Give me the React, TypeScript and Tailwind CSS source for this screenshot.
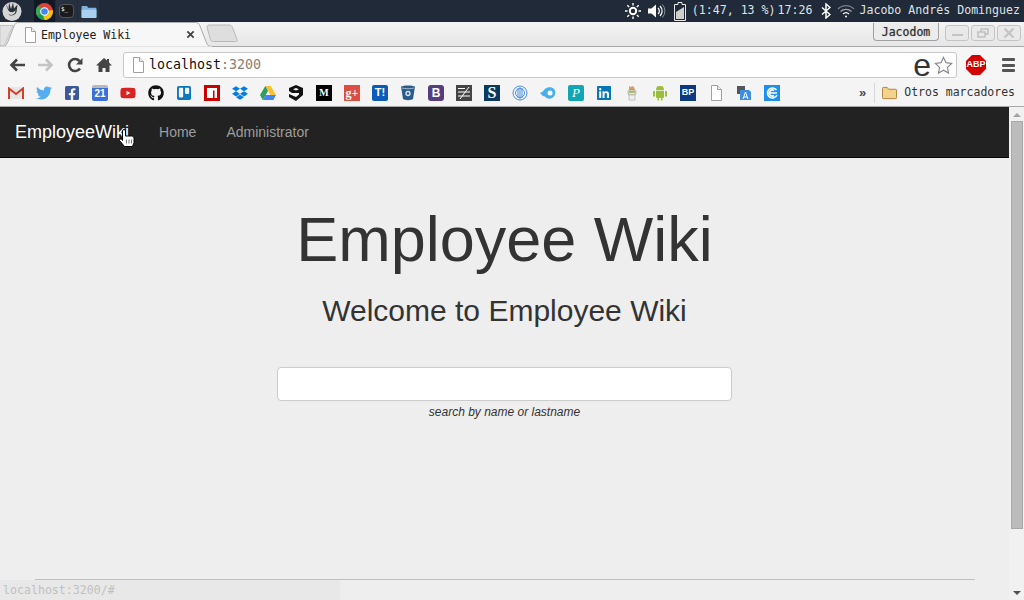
import React from 'react'
import {
  FaTwitter, FaFacebookSquare, FaYoutube, FaGithub, FaTrello, FaDropbox, FaLinkedin,
} from 'react-icons/fa'

const mono = "font-['DejaVu_Sans_Mono',monospace]"

const DocIcon = ({ className = '' }: { className?: string }) => (
  <svg viewBox="0 0 14 16" className={className}>
    <path d="M2.5 .5h6l4 4v11h-10z" fill="#fff" stroke="#a0a0a0" />
    <path d="M8.5 .5v4h4" fill="#eee" stroke="#a0a0a0" />
  </svg>
)

const Topbar = () => (
  <div className={`flex h-[22px] items-center bg-[#202a39] text-[11.6px] text-[#dfe3e8] ${mono}`}>
    <div className="flex h-[22px] w-[22px] items-center justify-center pl-[2px]">
      <svg viewBox="0 0 20 20" className="h-5 w-5">
        <circle cx="10" cy="10.500" r="9.500" fill="#d4d4d4" />
        <path d="M4 2.500l2.500 6 .5-7 2 6.500 2-6.500 1 6 3.500-4-1 7.500c-1 3-5.500 4.500-8 2.500 2 0 3.500-1 3.500-2.500-2.500 1-4.500-2-6-8.500z" fill="#2a2f38" />
        <path d="M7 10.500c2 1.500 5 1 6.500-1.500l-.5 3c-2 2-4 2.500-5.500 1.500z" fill="#d4d4d4" />
      </svg>
    </div>
    <div className="ml-[12px] flex h-[22px] gap-px">
      <div className="flex w-[21px] items-center justify-center bg-[#111926]">
        <svg viewBox="0 0 16 16" className="h-[17px] w-[17px]">
          <circle cx="8" cy="8" r="8" fill="#db4437" />
          <path d="M8 8L1 12a8 8 0 0 0 7 4z" fill="#0f9d58" />
          <path d="M8 8l7.800-1.500A8 8 0 0 1 8 16l-1-3z" fill="#f4c20d" />
          <path d="M8 8L1 12A8 8 0 0 1 2 2.700z" fill="#3aa757" />
          <circle cx="8" cy="8" r="3.600" fill="#4285f4" stroke="#fff" />
        </svg>
      </div>
      <div className="flex w-[21px] items-center justify-center bg-[#263040]">
        <div className="h-[14px] w-[15px] rounded-sm border border-[#555] bg-[#1a1a1a] pl-px text-[6px] leading-[8px] text-white">$_</div>
      </div>
      <div className="flex w-[21px] items-center justify-center bg-[#263040]">
        <svg viewBox="0 0 16 14" className="h-[13px] w-4">
          <path d="M0 2a1 1 0 0 1 1-1h5l1 2h8a1 1 0 0 1 1 1v9a1 1 0 0 1-1 1H1a1 1 0 0 1-1-1z" fill="#7fb2dc" />
          <path d="M0 5h16v8a1 1 0 0 1-1 1H1a1 1 0 0 1-1-1z" fill="#a9d0ee" />
        </svg>
      </div>
    </div>
    <div className="ml-auto flex items-center">
      <svg viewBox="0 0 16 16" className="h-4 w-4 text-white" fill="none" stroke="currentColor">
        <circle cx="8" cy="8" r="3.200" strokeWidth="2" />
        <path d="M8 0v2.500M8 13.500V16M0 8h2.500M13.500 8H16M2.300 2.300l1.800 1.800M11.900 11.900l1.800 1.800M2.300 13.700l1.800-1.800M11.900 4.100l1.800-1.800" strokeWidth="1.400" />
      </svg>
      <svg viewBox="0 0 20 16" className="ml-[6px] h-4 w-5">
        <path d="M1 5.500h3.500L9 1.500v13l-4.500-4H1z" fill="#fff" />
        <path d="M11 5a4 4 0 0 1 0 6M13 3a7 7 0 0 1 0 10" fill="none" stroke="#fff" strokeWidth="1.200" />
        <path d="M15.500 1.500a10 10 0 0 1 0 13" fill="none" stroke="#8a8f98" />
      </svg>
      <svg viewBox="0 0 12 19" className="ml-[7px] h-[19px] w-3">
        <path d="M.5 2.500h3.500V.5h4v2h3.500v16H.5z" fill="#202a39" stroke="#e8e8e8" />
        <path d="M2 17V10l8-5v12z" fill="#cfcfcf" />
      </svg>
      <span className="ml-[6px] whitespace-pre">(1:47, 13 %)</span>
      <span className="ml-[2px]">17:26</span>
      <svg viewBox="0 0 10 16" className="ml-[9px] h-4 w-[10px]" fill="none" stroke="#fff" strokeWidth="1.500">
        <path d="M1 4.500l8 7-4 3.500V1l4 3.500-8 7" />
      </svg>
      <svg viewBox="0 0 18 14" className="ml-[6px] h-[14px] w-[18px]" fill="none" strokeWidth="1.300">
        <path d="M1 5a11 11 0 0 1 16 0" stroke="#7b818a" />
        <path d="M3.500 7.500a8 8 0 0 1 11 0" stroke="#a5a9af" />
        <path d="M6 10a4.500 4.500 0 0 1 6 0" stroke="#fff" />
        <circle cx="9" cy="12.500" r="1" fill="#fff" stroke="none" />
      </svg>
      <span className="ml-[4px] mr-[4px] whitespace-nowrap">Jacobo Andrés Dominguez</span>
    </div>
  </div>
)

const Tabstrip = () => (
  <div className="relative flex h-[25px] items-start border-b border-[#a9a9a9] bg-gradient-to-b from-[#f4f4f4] to-[#e6e6e6]">
    <svg viewBox="0 0 245 25" className="absolute left-0 top-0 h-[25px] w-[245px]">
      <path d="M0 3.500h13L5 22c-.5 1-1 1.500-2 1.500H0z" fill="#e2e2e2" stroke="#c4c4c4" />
      <path d="M0 24.500h3C6 24.500 7 22 8 19.500L14 4c1-2.500 2-3.500 5-3.500h176c3 0 4 1 5 3.500l6 15.500c1 2.500 2 5 5 5" fill="#f7f7f7" stroke="#ababab" />
      <path d="M0 25h212" stroke="#f6f6f6" />
      <path d="M207 5.500c0-1.500 .5-2.500 2-2.500h20c2 0 3 1 3.500 2.500l4.500 12c.5 1.500 0 2-1.500 2h-22c-1.500 0-2.500-.5-3-2z" fill="#dedede" stroke="#b8b8b8" />
    </svg>
    <DocIcon className="relative ml-[23px] mt-[5px] h-4 w-[14px]" />
    <span className={`relative ml-[4px] mt-[5px] w-[145px] text-[11.5px] leading-[17px] text-[#222] ${mono}`}>Employee Wiki</span>
    <svg viewBox="0 0 10 10" className="relative mt-[8px] h-[9px] w-[9px]" stroke="#444" strokeWidth="2">
      <path d="M1.500 1.500l7 7M8.500 1.500l-7 7" />
    </svg>
    <div className="relative ml-auto mr-[3px] flex items-start">
      <div className={`mt-px flex h-[18px] w-[66px] items-center justify-center rounded-b-[4px] border border-t-0 border-[#a0a0a0] bg-[#ececec] pt-[2px] text-[11.500px] text-[#333] [text-shadow:0_0_1px_#777] ${mono}`}>Jacodom</div>
      <div className="ml-[6px] mt-[3px] flex gap-[2px]">
        <div className="flex h-[16px] w-[24px] items-center justify-center rounded-[3px] border border-[#c4c4c4] bg-[#e9e9e9]">
          <div className="mt-[4px] h-[2px] w-[11px] bg-[#c4c4c4]"></div>
        </div>
        <div className="flex h-[16px] w-[24px] items-center justify-center rounded-[3px] border border-[#c4c4c4] bg-[#e9e9e9]">
          <svg viewBox="0 0 12 10" className="h-[10px] w-3" fill="none" stroke="#bbb" strokeWidth="1.300">
            <rect x="4" y="1" width="7" height="5" />
            <rect x="1" y="4" width="7" height="5" fill="#e9e9e9" />
          </svg>
        </div>
        <div className="flex h-[16px] w-[24px] items-center justify-center rounded-[3px] border border-[#c4c4c4] bg-[#e9e9e9]">
          <svg viewBox="0 0 12 10" className="h-[10px] w-3" stroke="#c4c4c4" strokeWidth="2.200">
            <path d="M1.500 .5l9 9M10.500 .5l-9 9" />
          </svg>
        </div>
      </div>
    </div>
  </div>
)

const Toolbar = () => (
  <div className="flex h-[33px] items-center bg-[#f6f6f6] pt-[3px]">
    <svg viewBox="0 0 16 14" className="ml-[9px] h-[14px] w-4" fill="none" stroke="#444" strokeWidth="2.600">
      <path d="M16 7H3M8 1.500L2.500 7 8 12.500" />
    </svg>
    <svg viewBox="0 0 16 14" className="ml-[13px] h-[14px] w-4" fill="none" stroke="#c4c4c4" strokeWidth="2.600">
      <path d="M0 7h13M8 1.500L13.500 7 8 12.500" />
    </svg>
    <svg viewBox="0 0 16 16" className="ml-[13px] h-4 w-4" fill="none" stroke="#444" strokeWidth="2.600">
      <path d="M13 11.500A6 6 0 1 1 12.500 4" />
      <path d="M15.500 1v6.500H9z" fill="#444" stroke="none" />
    </svg>
    <svg viewBox="0 0 16 16" className="ml-[13px] h-4 w-4" fill="#444">
      <path d="M8 1L0 8.500h2.500V15h4v-4h3v4h4V8.500H16l-3-3V2h-2v1.500z" />
    </svg>
    <div className="ml-[11px] flex h-[26px] w-[834px] shrink-0 items-center rounded-[3px] border border-[#c8c8c8] bg-white">
      <DocIcon className="ml-[7px] h-4 w-[14px]" />
      <span className={`ml-[4px] text-[13.300px] text-[#111] ${mono}`}>localhost<span className="text-[#8b7d73]">:3200</span></span>
      <span className="ml-auto font-['Liberation_Sans',sans-serif] text-[32px] leading-[24px] text-[#333]">e</span>
      <svg viewBox="0 0 20 20" className="mr-[3px] ml-[3px] h-[19px] w-[19px]" fill="#fff" stroke="#888" strokeWidth="1.200">
        <path d="M10 1.500l2.600 5.500 6 .8-4.400 4.200 1.100 6L10 15l-5.300 3 1.100-6-4.400-4.200 6-.8z" />
      </svg>
    </div>
    <div className="ml-[9px] flex h-5 w-5 shrink-0 items-center justify-center bg-[#d40000] font-['Liberation_Sans',sans-serif] text-[9px] font-bold text-white [clip-path:polygon(30%_0,70%_0,100%_30%,100%_70%,70%_100%,30%_100%,0_70%,0_30%)]">ABP</div>
    <div className="ml-[16px] flex w-[13px] shrink-0 flex-col gap-[2.500px]">
      <div className="h-[3px] rounded-[1px] bg-[#555]"></div>
      <div className="h-[3px] rounded-[1px] bg-[#555]"></div>
      <div className="h-[3px] rounded-[1px] bg-[#555]"></div>
    </div>
  </div>
)

const Fav = ({ children, className = '' }: { children?: React.ReactNode; className?: string }) => (
  <div className={`flex h-4 w-4 items-center justify-center overflow-hidden font-['Liberation_Sans',sans-serif] font-bold leading-none ${className}`}>{children}</div>
)

const Bookmarks = () => (
  <div className="flex h-[27px] items-center border-b border-[#a8a8a8] bg-[#f4f4f4] pb-px pl-[8px]">
    <div className="flex gap-3">
      <Fav>
        <svg viewBox="0 0 16 12" className="h-3 w-4">
          <path d="M0 0h16v12H0z" fill="#e6e6e6" />
          <path d="M1 12V1.500L8 7l7-5.500V12" fill="none" stroke="#d0402f" strokeWidth="2" />
        </svg>
      </Fav>
      <Fav><FaTwitter className="h-4 w-4 text-[#55acee]" /></Fav>
      <Fav><FaFacebookSquare className="h-4 w-4 text-[#3b5998]" /></Fav>
      <Fav className="rounded-[2px] border-t-[3px] border-[#b9b9b9] bg-[#3d6fd9] text-[10px] text-white">21</Fav>
      <Fav><FaYoutube className="h-4 w-4 text-[#d92323]" /></Fav>
      <Fav><FaGithub className="h-4 w-4 text-[#111]" /></Fav>
      <Fav><FaTrello className="h-4 w-4 text-[#0c78bd]" /></Fav>
      <Fav className="bg-[#cc0000]">
        <svg viewBox="0 0 16 16" className="h-4 w-4" fill="#fff"><path d="M3 3h10v10h-2.500V5.500H9V13H3z" /></svg>
      </Fav>
      <Fav><FaDropbox className="h-4 w-4 text-[#007ee5]" /></Fav>
      <Fav>
        <svg viewBox="0 0 16 14" className="h-[14px] w-4">
          <path d="M5.300 0h5.400l5.300 9h-5.400z" fill="#fbc02d" />
          <path d="M5.300 0L0 9l2.700 5 5.300-9z" fill="#2e9e5b" />
          <path d="M2.700 14h10.600l2.700-5H5.400z" fill="#4285f4" />
        </svg>
      </Fav>
      <Fav>
        <svg viewBox="0 0 16 16" className="h-4 w-4" fill="#111">
          <path d="M8 0l7 3v7l-7 6-7-4V9l7 3 3-2.500V8H4L1 6V3zM5 4.200L8 5.500l3-1.300L8 3z" />
        </svg>
      </Fav>
      <Fav className="bg-black font-['Liberation_Serif',serif] text-[10px] text-white">M</Fav>
      <Fav className="bg-[#dc4e41] font-['Liberation_Serif',serif] text-[12px] text-white">g+</Fav>
      <Fav className="rounded-[2px] bg-[#0a5cb8] text-[11px] text-white">T!</Fav>
      <Fav>
        <svg viewBox="0 0 16 16" className="h-4 w-4">
          <path d="M1 1.500c3-1.500 11-1.500 14 0L13 14c-2 1.500-8 1.500-10 0z" fill="#2a5b8c" />
          <path d="M2 3c3 1 9 1 12 0" fill="none" stroke="#9fb9d2" />
          <circle cx="8" cy="8.500" r="2" fill="none" stroke="#dfe8f0" strokeWidth="1.300" />
        </svg>
      </Fav>
      <Fav className="rounded-[3px] bg-[#563d7c] text-[12px] text-white">B</Fav>
      <Fav className="bg-[#444]">
        <svg viewBox="0 0 16 16" className="h-4 w-4" fill="none" stroke="#fff"><path d="M2 3.500h7M2 7h12M2 11h12M4 14L13 2" /></svg>
      </Fav>
      <Fav className="bg-[#0b3a5e] font-['Liberation_Serif',serif] text-[16px] text-white">S</Fav>
      <Fav>
        <svg viewBox="0 0 16 16" className="h-4 w-4" fill="none" stroke="#4a90e2">
          <circle cx="8" cy="8" r="7" /><circle cx="8" cy="8" r="4.500" /><path d="M6 3v10M8 2v12M10 3v10" />
        </svg>
      </Fav>
      <Fav>
        <svg viewBox="0 0 16 12" className="h-3 w-4">
          <path d="M0 6c3-1 3-2 5-4 2-2 7-2.500 9 0 2.500 3 1.500 8-3 9.500-3 .5-5-.5-6-2-2 0-3-1-5-3.500z" fill="#48b0e8" />
          <circle cx="10" cy="6" r="2.500" fill="#fff" />
        </svg>
      </Fav>
      <Fav className="rounded-[2px] bg-[#12a5b3] font-['Liberation_Serif',serif] text-[13px] italic font-normal text-white">P</Fav>
      <Fav><FaLinkedin className="h-4 w-4 text-[#0877b5]" /></Fav>
      <Fav>
        <svg viewBox="0 0 12 16" className="h-4 w-3">
          <path d="M3 1l2 1 1-1 2 1 1 3H3z" fill="#d9a066" />
          <rect x="2" y="5" width="8" height="5" rx="2" fill="#f1e6c8" stroke="#777" strokeWidth=".5" />
          <rect x="3" y="10" width="6" height="5" fill="#eee" stroke="#999" strokeWidth=".5" />
          <path d="M3 7h6" stroke="#5a8f2a" />
        </svg>
      </Fav>
      <Fav>
        <svg viewBox="0 0 16 16" className="h-4 w-4" fill="#9cbf3b">
          <path d="M4 5a4 4 0 0 1 8 0z" />
          <path d="M5.500 1l1 1.500M10.500 1l-1 1.500" stroke="#9cbf3b" fill="none" />
          <path d="M4 5.700h8v6.300a1 1 0 0 1-1 1h-.5v2.500H9V13H7v2.500H5.500V13H5a1 1 0 0 1-1-1z" />
          <rect x="1" y="5.700" width="2" height="6" rx="1" />
          <rect x="13" y="5.700" width="2" height="6" rx="1" />
        </svg>
      </Fav>
      <Fav className="bg-[#0b3a82] text-[9px] text-white">BP</Fav>
      <Fav><DocIcon className="h-4 w-[14px]" /></Fav>
      <Fav>
        <svg viewBox="0 0 16 16" className="h-4 w-4">
          <path d="M1 1h8v8H1z" fill="#555" />
          <path d="M4 5h9l2 2v8H4z" fill="#3a8fe0" />
          <path d="M7 14l2.500-7 2.500 7M8 12h3" stroke="#fff" fill="none" />
        </svg>
      </Fav>
      <Fav className="bg-[#1c8ff0]">
        <svg viewBox="0 0 16 16" className="h-4 w-4" fill="none" stroke="#fff" strokeWidth="1.600">
          <path d="M12.500 5A5 5 0 1 0 13 10M5.500 8h7.500M10 5.500A3 3 0 1 0 10 10.500" />
        </svg>
      </Fav>
    </div>
    <span className="ml-[79px] font-['Liberation_Sans',sans-serif] text-[13px] font-bold leading-none text-[#444]">»</span>
    <div className="ml-[8px] h-[20px] w-px bg-[#d8d8d8]"></div>
    <svg viewBox="0 0 16 14" className="ml-[7px] h-[14px] w-[15px]" fill="#f4d28b" stroke="#a9803a">
      <path d="M.5 2a1 1 0 0 1 1-1h4l1.500 2h7.500a1 1 0 0 1 1 1v8a1 1 0 0 1-1 1h-13a1 1 0 0 1-1-1z" />
    </svg>
    <span className={`ml-[7px] whitespace-nowrap text-[11.500px] text-[#333] ${mono}`}>Otros marcadores</span>
  </div>
)

const Page = () => (
  <div className="flex min-h-0 flex-1 font-['Liberation_Sans',sans-serif]">
    <div className="flex min-w-0 flex-1 flex-col bg-[#eeeeee]">
      <nav className="flex h-[51px] items-center border-b border-[#080808] bg-[#222222]">
        <a href="#" className="ml-[15px] text-[18px] text-white">EmployeeWiki</a>
        <a href="#" className="ml-[30px] text-[14px] text-[#9d9d9d]">Home</a>
        <a href="#" className="ml-[30px] text-[14px] text-[#9d9d9d]">Administrator</a>
      </nav>
      <div className="flex flex-1 flex-col items-center text-[#333]">
        <h1 className="mt-[47px] text-[63px] leading-[69px]">Employee Wiki</h1>
        <h2 className="mt-[20px] text-[30px] leading-[33px]">Welcome to Employee Wiki</h2>
        <input className="mt-[40px] h-[34px] w-[455px] rounded-[4px] border border-[#cccccc] bg-white" />
        <p className="mt-[4px] text-[12px] italic leading-[14px]">search by name or lastname</p>
        <div className="mt-auto mb-5 h-px w-[940px] bg-[#bfbfbf]"></div>
      </div>
    </div>
    <div className="flex w-[15px] flex-col items-center bg-[#f1f1f1]">
      <div className="mt-[6px] h-0 w-0 border-x-[4px] border-b-[4px] border-x-transparent border-b-[#a3a3a3]"></div>
      <div className="mt-[4px] h-[408px] w-[12px] border border-[#a8a8a8] bg-[#bcbcbc]"></div>
      <div className="mt-auto mb-[5px] h-0 w-0 border-x-[4px] border-t-[4px] border-x-transparent border-t-[#505050]"></div>
    </div>
  </div>
)

export default function App() {
  return (
    <div className="relative flex h-[600px] w-[1024px] flex-col overflow-hidden">
      <Topbar />
      <Tabstrip />
      <Toolbar />
      <Bookmarks />
      <Page />
      {/* hover cursor */}
      <svg viewBox="0 0 16 18" className="absolute left-[119px] top-[129px] h-[18px] w-4">
        <path d="M3.500 2a1.500 1.500 0 0 1 3 0v5h6c1.500 0 2.500 1 2.500 2.500v4L13.500 17.500h-8L.5 11.500c-.5-1 1-2 2-1l1 1z" fill="#fff" stroke="#000" />
        <path d="M7.500 10.500v4M10 10.500v4M12.500 10.500v4" stroke="#777" />
      </svg>
      {/* status bubble */}
      <div className={`absolute bottom-0 left-0 flex h-5 w-[340px] items-center rounded-tr-[3px] bg-[#e8e8e8] pl-[3px] pt-[2px] text-[11.600px] text-[#c0c0c0] ${mono}`}>localhost:3200/#</div>
    </div>
  )
}
